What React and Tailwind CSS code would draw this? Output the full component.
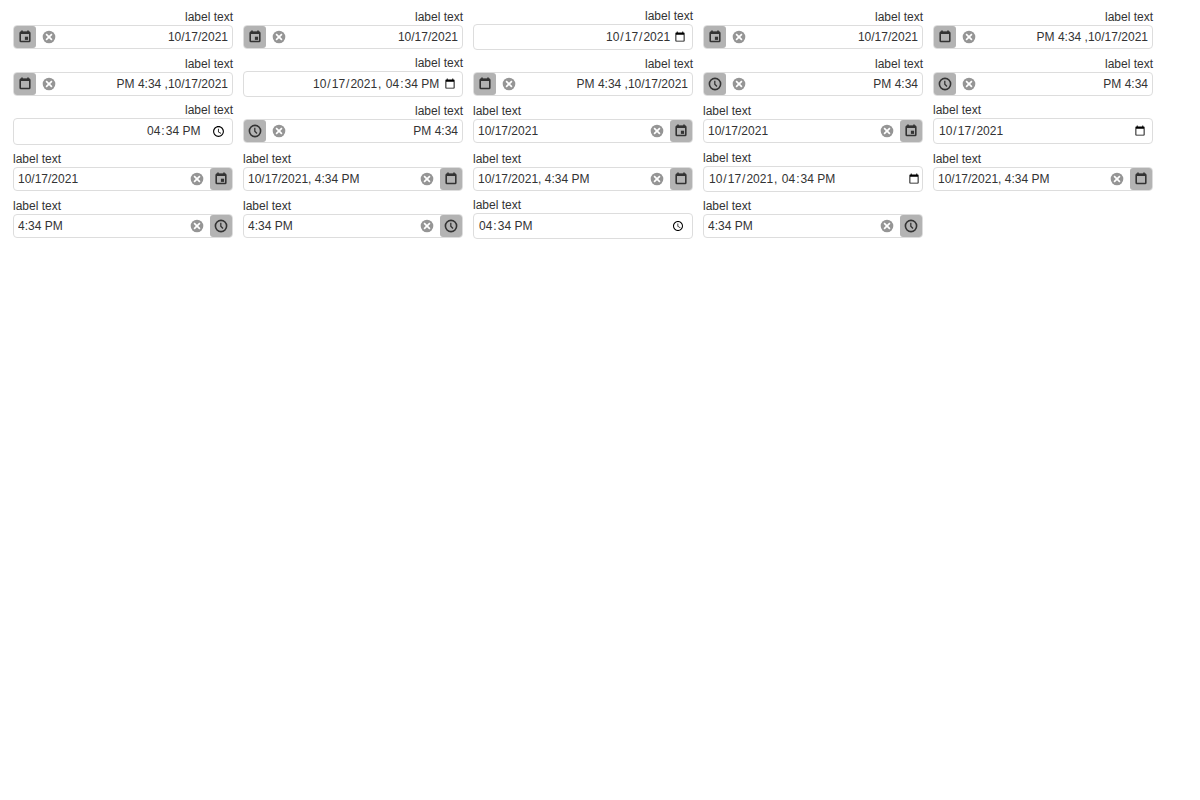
import { useId } from 'react';

function CalendarShape() {
  return (
    <>
      <rect x="3.2" y="3.4" width="9.6" height="9.1" rx="0.7" fill="none" stroke="currentColor" strokeWidth="1.6" />
      <path d="M3 2.8h10v2.2H3zM4.2 1.6h1.6v2H4.2zM10.2 1.6h1.6v2h-1.6z" />
    </>
  );
}

function EventShape() {
  return (
    <>
      <CalendarShape />
      <rect x="7.9" y="7.7" width="3.2" height="3.2" />
    </>
  );
}

function ClockShape() {
  return (
    <g fill="none" stroke="currentColor">
      <circle cx="8" cy="8" r="5.6" strokeWidth="1.6" />
      <path d="M7.8 4.8V8.2L10 10.5" strokeWidth="1.3" />
    </g>
  );
}

function ClearShape() {
  return (
    <>
      <circle cx="8" cy="8" r="6.3" />
      <path d="M5.1 5.1l5.8 5.8M10.9 5.1l-5.8 5.8" fill="none" stroke="#fff" strokeWidth="1.7" />
    </>
  );
}

const RTL_CALENDAR =
  'min-h-[26px] px-1 [&::-webkit-datetime-edit]:mr-0 [&::-webkit-datetime-edit]:pr-0 [&::-webkit-datetime-edit-fields-wrapper]:mr-0 [&::-webkit-datetime-edit-fields-wrapper]:pr-0 [&::-webkit-calendar-picker-indicator]:-ml-5';

const KINDS = {
  date: {
    text: '10/17/2021',
    type: 'date',
    value: '2021-10-17',
    Shape: EventShape,
    action: 'Open calendar',
    nativeLtr: 'min-h-[26px] px-1',
    nativeRtl: RTL_CALENDAR,
  },
  datetime: {
    text: '10/17/2021, 4:34 PM',
    type: 'datetime-local',
    value: '2021-10-17T16:34',
    Shape: CalendarShape,
    action: 'Open date and time picker',
    nativeLtr: 'min-h-[26px] pl-1 pr-0',
    nativeRtl: RTL_CALENDAR,
  },
  time: {
    text: '4:34 PM',
    type: 'time',
    value: '16:34',
    Shape: ClockShape,
    action: 'Open time list',
    nativeLtr: 'min-h-[26px] px-1',
    nativeRtl:
      'min-h-[27px] px-1 pb-px [&::-webkit-calendar-picker-indicator]:ml-1.5 [&::-webkit-calendar-picker-indicator]:size-[13px]',
  },
};

const FIELDS = [
  ['date', 'rtl'],
  ['date', 'rtl'],
  ['date', 'rtl', true],
  ['date', 'rtl'],
  ['datetime', 'rtl'],
  ['datetime', 'rtl'],
  ['datetime', 'rtl', true],
  ['datetime', 'rtl'],
  ['time', 'rtl'],
  ['time', 'rtl'],
  ['time', 'rtl', true],
  ['time', 'rtl'],
  ['date', 'ltr'],
  ['date', 'ltr'],
  ['date', 'ltr', true],
  ['date', 'ltr'],
  ['datetime', 'ltr'],
  ['datetime', 'ltr'],
  ['datetime', 'ltr', true],
  ['datetime', 'ltr'],
  ['time', 'ltr'],
  ['time', 'ltr'],
  ['time', 'ltr', true],
  ['time', 'ltr'],
];

function Icon({ children }) {
  return (
    <svg viewBox="0 0 16 16" fill="currentColor" aria-hidden="true" className="size-4">
      {children}
    </svg>
  );
}

function PickerField({ id, kind }) {
  const { Shape } = kind;
  return (
    <div className="flex h-6 rounded border border-[#ddd] bg-white">
      <input
        id={id}
        type="text"
        defaultValue={kind.text}
        className="min-w-0 flex-1 bg-transparent px-1 outline-none"
      />
      <button type="button" aria-label="Clear" className="flex w-6 items-center justify-center text-[#959595]">
        <Icon>
          <ClearShape />
        </Icon>
      </button>
      <button
        type="button"
        aria-label={kind.action}
        className="ms-px flex w-[22px] items-center justify-center rounded-[3px] bg-[#b3b3b3] text-[#333]"
      >
        <Icon>
          <Shape />
        </Icon>
      </button>
    </div>
  );
}

const RTL_EDIT =
  '[&::-webkit-datetime-edit]:ml-auto [&::-webkit-datetime-edit]:w-auto [&::-webkit-datetime-edit]:flex-none';

function NativeField({ id, kind, dir }) {
  const base =
    'w-full rounded border border-[#ddd] bg-white outline-none [&::-webkit-datetime-edit-ampm-field]:ps-0';
  const variant = dir === 'rtl' ? `${RTL_EDIT} ${kind.nativeRtl}` : kind.nativeLtr;
  return <input id={id} type={kind.type} defaultValue={kind.value} className={`${base} ${variant}`} />;
}

function Field({ name, dir, native }) {
  const id = useId();
  const kind = KINDS[name];
  return (
    <div dir={dir} className={native ? 'flex w-[220px] flex-col' : 'flex w-[220px] flex-col py-px'}>
      <label htmlFor={id} className="leading-[15px]">
        label text
      </label>
      {native ? <NativeField id={id} kind={kind} dir={dir} /> : <PickerField id={id} kind={kind} />}
    </div>
  );
}

export default function App() {
  return (
    <main className="flex flex-wrap items-start gap-x-2.5 gap-y-1.5 py-[9px] ps-[13px] font-['Liberation_Sans',Arial,sans-serif] text-xs text-[#333]">
      {FIELDS.map(([name, dir, native], i) => (
        <Field key={i} name={name} dir={dir} native={native} />
      ))}
    </main>
  );
}
